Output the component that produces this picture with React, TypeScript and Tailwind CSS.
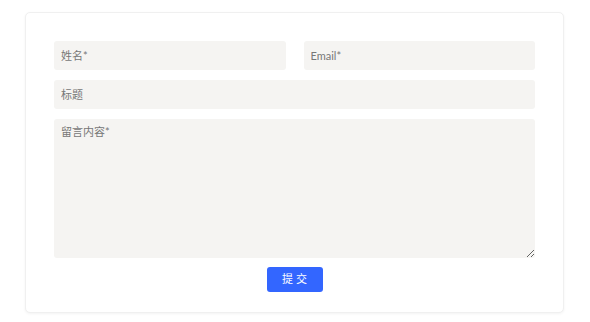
export default function App() {
  const field =
    "h-[29px] w-full rounded-[3px] bg-[#f5f4f2] px-[7px] text-[11px] text-[#555] placeholder:text-[#777] outline-none";
  return (
    <div className="min-h-[322px] bg-white pt-3 font-['Lato','Noto_Sans_CJK_SC',sans-serif]">
      <form className="ml-[25px] w-[539px] rounded-[5px] border border-[#f0f0f0] bg-white px-[28px] pt-[28px] pb-[20px] shadow-[0_1px_3px_rgba(0,0,0,0.05)]">
        <div className="grid grid-cols-2 gap-x-[18px]">
          <input className={field} placeholder="姓名*" />
          <input className={field} placeholder="Email*" />
        </div>
        <input className={`${field} mt-[10px]`} placeholder="标题" />
        <textarea
          className="mt-[10px] block h-[139px] w-full rounded-[3px] bg-[#f5f4f2] px-[7px] py-[5px] text-[11px] text-[#555] placeholder:text-[#777] outline-none"
          placeholder="留言内容*"
        />
        <div className="mt-[9px] flex justify-center">
          <button
            type="button"
            className="h-[25px] w-[56px] rounded-[3px] bg-[#3366ff] text-[11px] tracking-[3px] pl-[3px] text-white"
          >
            提交
          </button>
        </div>
      </form>
    </div>
  );
}
